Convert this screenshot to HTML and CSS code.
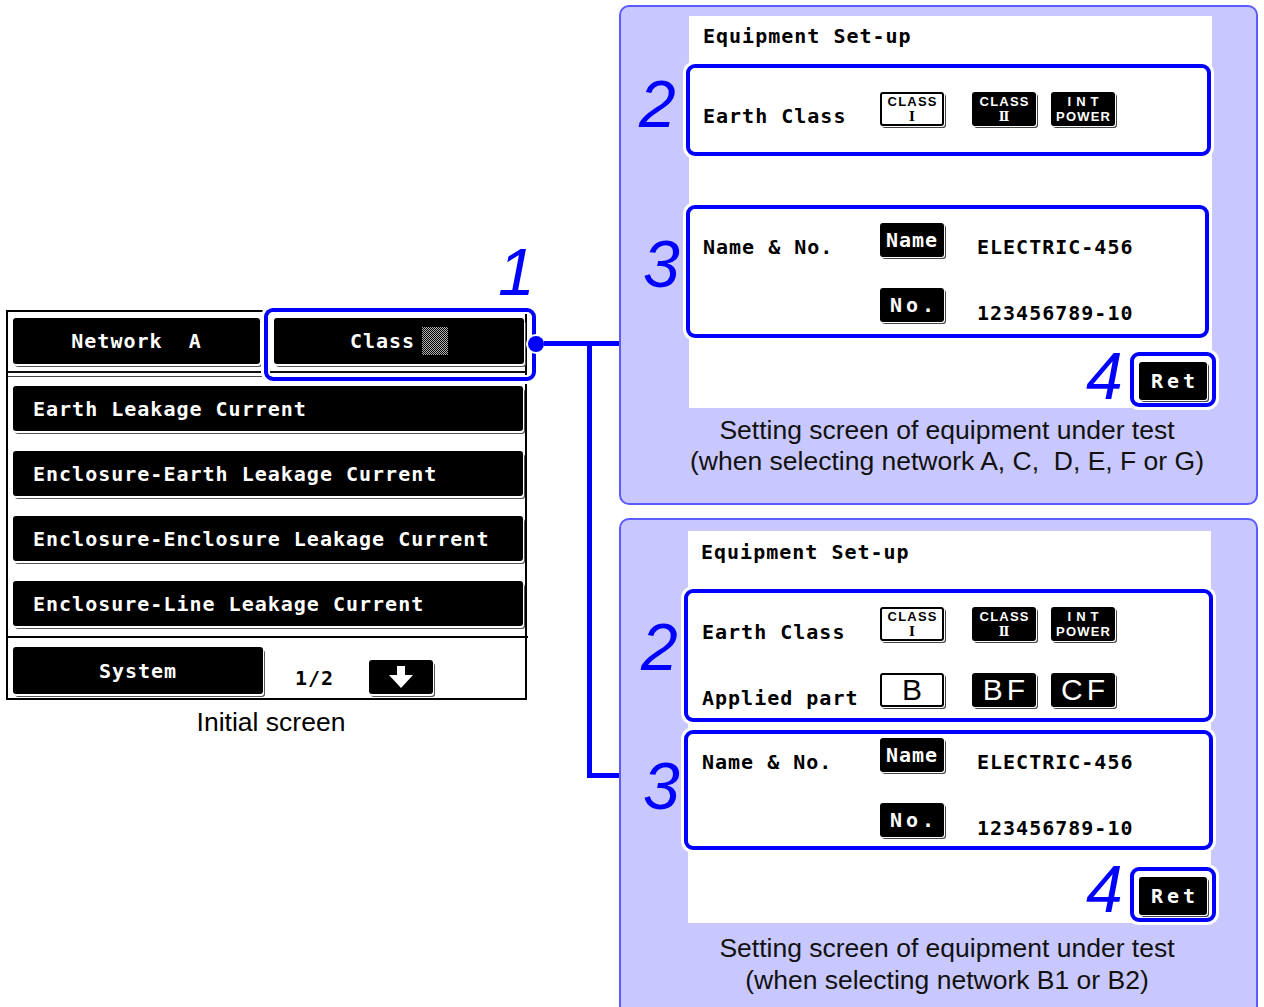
FILE: index.html
```html
<!DOCTYPE html>
<html>
<head>
<meta charset="utf-8">
<title>Equipment Set-up</title>
<link rel="stylesheet" href="styles.css">
</head>
<body>

<!-- initial screen of the tester -->
<div class="initial">
  <div class="lcd">
    <div class="lcd-top">
      <div class="key key-net">Network&nbsp;&nbsp;A</div>
      <div class="key key-class">Class<span class="dots"></span></div>
    </div>
    <div class="lcd-sep"></div>
    <div class="lcd-list">
      <div class="key key-wide">Earth Leakage Current</div>
      <div class="key key-wide">Enclosure-Earth Leakage Current</div>
      <div class="key key-wide">Enclosure-Enclosure Leakage Current</div>
      <div class="key key-wide">Enclosure-Line Leakage Current</div>
    </div>
    <div class="lcd-rule"></div>
    <div class="lcd-bottom">
      <div class="key key-sys">System</div>
      <span class="page">1/2</span>
      <div class="key key-down">
        <svg width="24" height="22" viewBox="0 0 24 22"><polygon points="8,0 16,0 16,9 24,9 12,22 0,9 8,9" fill="#fff"/></svg>
      </div>
    </div>
  </div>
  <p class="caption">Initial screen</p>
</div>

<!-- call-out from the Class key -->
<div class="ring ring-class"><span class="num num-1">1</span><span class="dot"></span></div>
<div class="wire-h"></div>
<div class="wire-v"></div>

<!-- networks A, C, D, E, F, G -->
<div class="panel panel-a">
  <div class="screen">
    <div class="title">Equipment Set-up</div>
    <div class="box box-a2">
      <span class="num num-2">2</span>
      <div class="row">
        <span class="label">Earth Class</span>
        <div class="tags">
          <span class="tag tag-light"><b>CLASS</b><i>Ⅰ</i></span>
          <span class="tag"><b>CLASS</b><i>Ⅱ</i></span>
          <span class="tag"><b class="spaced">INT</b><b>POWER</b></span>
        </div>
      </div>
    </div>
    <div class="box box-a3">
      <span class="num num-3">3</span>
      <div class="row">
        <span class="label">Name &amp; No.</span>
        <span class="chip">Name</span>
        <span class="value">ELECTRIC-456</span>
      </div>
      <div class="row row-next">
        <span class="label"></span>
        <span class="chip chip-no">No.</span>
        <span class="value">123456789-10</span>
      </div>
    </div>
    <div class="ret-row">
      <div class="ring-ret"><span class="num num-4">4</span><span class="chip chip-ret">Ret</span></div>
    </div>
  </div>
  <p class="panel-caption">Setting screen of equipment under test<br>(when selecting network A, C,&nbsp; D, E, F or G)</p>
</div>

<!-- networks B1, B2 -->
<div class="panel panel-b">
  <div class="screen">
    <div class="title">Equipment Set-up</div>
    <div class="box box-b2">
      <span class="num num-2">2</span>
      <div class="row">
        <span class="label">Earth Class</span>
        <div class="tags">
          <span class="tag tag-light"><b>CLASS</b><i>Ⅰ</i></span>
          <span class="tag"><b>CLASS</b><i>Ⅱ</i></span>
          <span class="tag"><b class="spaced">INT</b><b>POWER</b></span>
        </div>
      </div>
      <div class="row row-next">
        <span class="label">Applied part</span>
        <div class="tags">
          <span class="tag tag-light tag-big">B</span>
          <span class="tag tag-big">BF</span>
          <span class="tag tag-big">CF</span>
        </div>
      </div>
    </div>
    <div class="box box-b3">
      <span class="num num-3">3</span>
      <div class="row">
        <span class="label">Name &amp; No.</span>
        <span class="chip">Name</span>
        <span class="value">ELECTRIC-456</span>
      </div>
      <div class="row row-next">
        <span class="label"></span>
        <span class="chip chip-no">No.</span>
        <span class="value">123456789-10</span>
      </div>
    </div>
    <div class="ret-row">
      <div class="ring-ret"><span class="num num-4">4</span><span class="chip chip-ret">Ret</span></div>
    </div>
  </div>
  <p class="panel-caption">Setting screen of equipment under test<br>(when selecting network B1 or B2)</p>
</div>

</body>
</html>
```

FILE: styles.css
```css
body {margin: 0; width: 1264px; height: 1007px; position: relative; overflow: hidden; background: #fff; color: #000; font-family: "Liberation Sans", Arial, sans-serif}

/* lcd look */
.key, .label, .value, .title, .page, .chip {font: bold 20px/24px "DejaVu Sans Mono", monospace; letter-spacing: 1px; white-space: pre}
.key {background: #000; color: #fff; border-radius: 3px; box-shadow: 1px 2px 0 #fff, 2px 3px 0 #555; display: flex; align-items: center; justify-content: center}

.initial {position: absolute; left: 6px; top: 310px; width: 521px}
.lcd {height: 390px; border: 2px solid #000; box-sizing: border-box; background: #fff}
.lcd-top {display: flex; gap: 14px; height: 59px; box-sizing: border-box; padding: 6px 0 0 5px}
.key-net {width: 247px; height: 46px}
.key-class {width: 250px; height: 46px}
.dots {display: inline-block; width: 26px; height: 28px; margin-left: 7px; background: repeating-conic-gradient(#000 0 25%, #fff 0 50%) 0 0 / 2px 2px; opacity: 0.7}
.lcd-sep {height: 3px; border-top: 2px solid #111; border-bottom: 1px solid #444}
.lcd-list {display: flex; flex-direction: column; gap: 20px; padding: 9px 0 0 5px}
.key-wide {width: 510px; height: 45px; justify-content: flex-start; padding-left: 20px; box-sizing: border-box}
.lcd-rule {margin-top: 10px; width: calc(100% + 3px); height: 2px; background: #000}
.lcd-bottom {display: flex; align-items: flex-end; padding: 9px 0 0 5px}
.key-sys {width: 250px; height: 47px}
.page {margin: 0 35px 4px 32px}
.key-down {width: 64px; height: 34px}
.caption {margin: 7px 0 0; padding-left: 9px; text-align: center; font-size: 26.5px; line-height: 30px}

/* call-out rings and wires */
.ring {position: absolute; border: 4px solid #00f; border-radius: 9px; box-shadow: 0 0 0 3px #fff, inset 0 0 0 2px #fff; box-sizing: border-box}
.ring-class {left: 264px; top: 308px; width: 272px; height: 73px}
.dot {position: absolute; right: -12px; top: 24px; width: 16px; height: 16px; border-radius: 50%; background: #00f; box-shadow: 0 0 0 2px #fff}
.wire-h {position: absolute; left: 544px; top: 341px; width: 75px; height: 5px; background: #00f}
.wire-v {position: absolute; left: 587px; top: 341px; width: 32px; height: 437px; border-left: 5px solid #00f; border-bottom: 5px solid #00f; box-sizing: border-box}
.num {position: absolute; font: italic 66px/66px "Liberation Sans", Arial, sans-serif; color: #00f}
.num-1 {left: 230px; top: -73px}

/* set-up panels */
.panel {position: absolute; left: 619px; width: 639px; height: 500px; box-sizing: border-box; border: 2px solid #5b5bff; border-radius: 10px; background: #c8c8ff}
.panel-a {top: 5px}
.panel-b {top: 518px}
.screen {position: relative; width: 523px; height: 392px; background: #fff; display: flex; flex-direction: column}
.panel-a .screen {margin: 9px 0 0 68px}
.panel-b .screen {margin: 11px 0 0 67px}
.title {padding-left: 14px; margin-top: 8px}
.panel-b .title {margin-top: 9px; padding-left: 13px}

.box {position: relative; border: 4px solid #00f; border-radius: 9px; box-shadow: 0 0 0 3px #fff; background: #fff; box-sizing: border-box}
.box-a2 {margin: 16px 0 0 -3px; width: 525px; height: 92px; padding: 24px 0 0 13px}
.box-a3 {margin: 49px 0 0 -3px; width: 523px; height: 133px; padding: 14px 0 0 13px}
.box-b2 {margin: 25px 0 0 -4px; width: 529px; height: 133px; padding: 14px 0 0 14px}
.box-b3 {margin: 8px 0 0 -4px; width: 529px; height: 120px; padding: 4px 0 0 14px}
.box-a2 .num-2 {left: -51px; top: 3px}
.box-a3 .num-3 {left: -47px; top: 22px}
.box-b2 .num-2 {left: -47px; top: 21px}
.box-b3 .num-3 {left: -45px; top: 19px}

.row {display: flex; align-items: flex-end}
.row-next {margin-top: 29px}
.label {width: 177px}
.box-b2 .label, .box-b3 .label {width: 178px}
.value {margin-left: 33px}

.tags {display: flex; gap: 15px}
.tag {width: 64px; height: 34px; margin-bottom: 3px; box-sizing: border-box; background: #000; color: #fff; border-radius: 3px; box-shadow: 1px 1px 0 #fff, 2px 2px 0 #444; display: flex; flex-direction: column; align-items: center; justify-content: center}
.box-a2 .tag {margin-bottom: 2px}
.tag:first-child {margin-right: 13px}
.tag b {font: bold 13px/15px "Liberation Sans", Arial, sans-serif; letter-spacing: 1.2px; margin-right: -1.2px}
.tag i {font: bold 12.5px/15px "DejaVu Serif", serif; font-style: normal}
.tag .spaced {letter-spacing: 5px; margin-right: -5px}
.tag-light {background: #fff; color: #000; border: 2px solid #000}
.tag-big {font: 30px/30px "Liberation Sans", Arial, sans-serif; letter-spacing: 4px; text-indent: 4px}

.chip {width: 64px; height: 34px; margin-bottom: 2px; background: #000; color: #fff; border-radius: 3px; box-shadow: 1px 1px 0 #fff, 2px 2px 0 #444; display: flex; align-items: center; justify-content: center; letter-spacing: 1px}
.row-next .chip {margin-bottom: 3px}
.chip-no {letter-spacing: 4px; text-indent: 4px}

.ret-row {display: flex; justify-content: flex-end}
.panel-a .ret-row {margin: 14px -4px 0 0}
.panel-b .ret-row {margin: 17px -5px 0 0}
.ring-ret {position: relative; border: 4px solid #00f; border-radius: 9px; box-shadow: 0 0 0 3px #fff; padding: 6px 5px 3px 5px; background: #fff}
.chip-ret {width: 68px; height: 38px; margin: 0; letter-spacing: 4px; text-indent: 4px}
.num-4 {left: -48px; top: -13px}
.panel-b .num-4 {top: -15px}

.panel-caption {margin: 7px 0 0; padding-left: 17px; text-align: center; font-size: 26.5px; line-height: 31px; color: #111}
.panel-b .panel-caption {margin-top: 9px; line-height: 32px}
```
